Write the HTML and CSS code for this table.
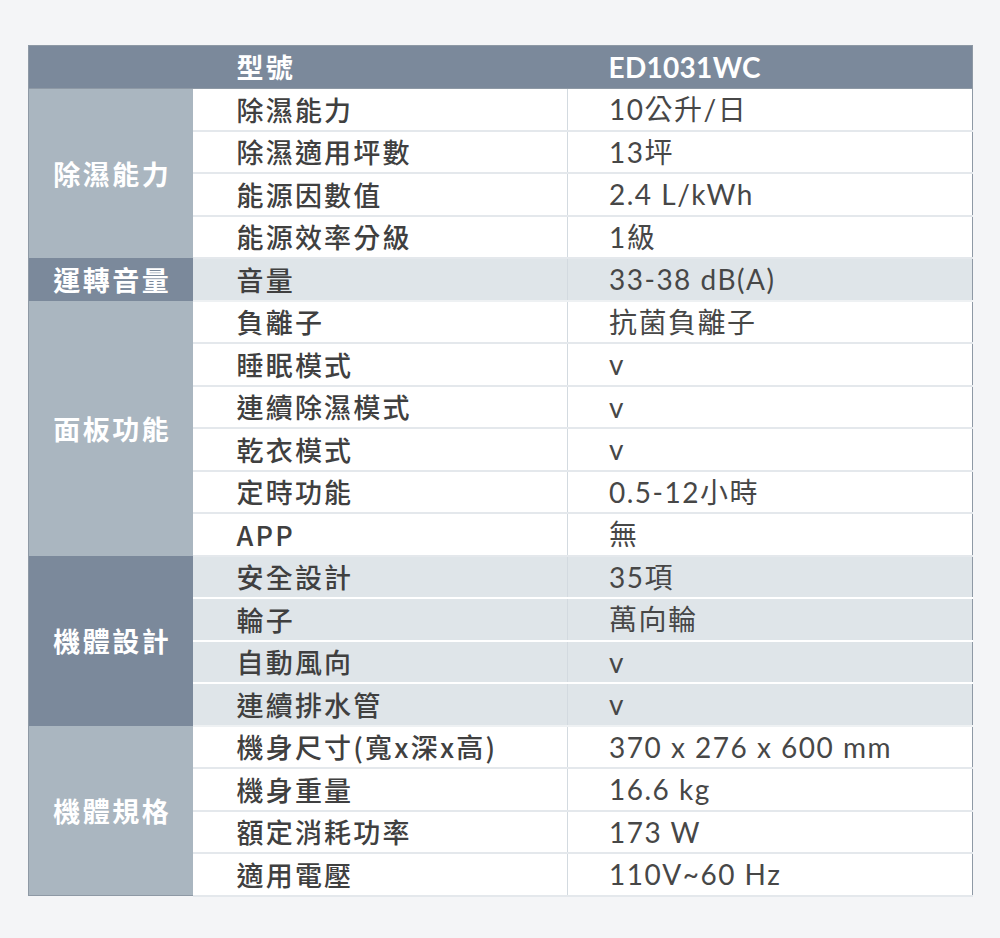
FILE: index.html
```html
<!DOCTYPE html>
<html lang="zh-Hant">
<head>
<meta charset="utf-8">
<link rel="stylesheet" href="styles.css">
</head>
<body>
<div class="wrap">
<table class="spec">
  <colgroup><col class="c1"><col class="c2"><col class="c3"></colgroup>
  <thead>
    <tr class="head"><th></th><th class="k">型號</th><th class="v">ED1031WC</th></tr>
  </thead>
  <tbody>
    <tr><th class="cat light" rowspan="4">除濕能力</th><td class="k">除濕能力</td><td class="v">10公升/日</td></tr>
    <tr><td class="k">除濕適用坪數</td><td class="v">13坪</td></tr>
    <tr><td class="k">能源因數值</td><td class="v">2.4 L/kWh</td></tr>
    <tr class="last"><td class="k">能源效率分級</td><td class="v">1級</td></tr>
    <tr class="grey last"><th class="cat dark">運轉音量</th><td class="k">音量</td><td class="v">33-38 dB(A)</td></tr>
    <tr><th class="cat light" rowspan="6">面板功能</th><td class="k">負離子</td><td class="v">抗菌負離子</td></tr>
    <tr><td class="k">睡眠模式</td><td class="v">v</td></tr>
    <tr><td class="k">連續除濕模式</td><td class="v">v</td></tr>
    <tr><td class="k">乾衣模式</td><td class="v">v</td></tr>
    <tr><td class="k">定時功能</td><td class="v">0.5-12小時</td></tr>
    <tr class="last"><td class="k">APP</td><td class="v">無</td></tr>
    <tr class="grey"><th class="cat dark" rowspan="4">機體設計</th><td class="k">安全設計</td><td class="v">35項</td></tr>
    <tr class="grey"><td class="k">輪子</td><td class="v">萬向輪</td></tr>
    <tr class="grey"><td class="k">自動風向</td><td class="v">v</td></tr>
    <tr class="grey last"><td class="k">連續排水管</td><td class="v">v</td></tr>
    <tr><th class="cat light" rowspan="4">機體規格</th><td class="k">機身尺寸(寬x深x高)</td><td class="v">370 x 276 x 600 mm</td></tr>
    <tr><td class="k">機身重量</td><td class="v">16.6 kg</td></tr>
    <tr><td class="k">額定消耗功率</td><td class="v">173 W</td></tr>
    <tr class="last"><td class="k">適用電壓</td><td class="v">110V~60 Hz</td></tr>
  </tbody>
</table>
</div>
</body>
</html>
```
FILE: styles.css
```css
html, body {
  margin: 0;
  padding: 0;
  background: #f4f5f7;
}
.wrap {
  padding: 45px 0 0 28px;
}
.spec {
  width: 944px;
  table-layout: fixed;
  border-collapse: collapse;
  border: 1px solid #8e99a5;
  font-family: "Noto Sans CJK TC", "Noto Sans", sans-serif;
}
.c1 { width: 164px; }
.c2 { width: 375px; }
.c3 { width: 405px; }
.spec th, .spec td {
  padding: 0;
  height: 42.5px;
  box-sizing: border-box;
  text-align: left;
  vertical-align: middle;
  white-space: nowrap;
}
.head th {
  background: #7b899b;
  color: #ffffff;
  border-bottom: 1px solid #8e99a5;
}
.k {
  padding-left: 44px !important;
  font-size: 27px;
  font-weight: 500;
  letter-spacing: 2.2px;
  color: #404040;
  line-height: 1;
}
.head .k {
  font-weight: 700;
}
.v {
  padding-left: 41px !important;
  font-family: "Lato", "Noto Sans CJK TC", sans-serif;
  font-size: 28px;
  letter-spacing: 1.5px;
  color: #474747;
  line-height: 1;
}
.head .v {
  font-weight: 700;
  letter-spacing: 0.3px;
  color: #ffffff;
}
tbody td {
  background: #ffffff;
  border-bottom: 2px solid #e4e8ec;
}
tbody td.k {
  border-right: 1px solid #d3dae0;
}
tbody tr.grey td {
  background: #dfe5e9;
  border-bottom-color: #ffffff;
}
tbody tr.last td {
  border-bottom-color: #e4e8ec;
}
tbody tr.grey.last td {
  border-bottom-color: #eef1f3;
}
.cat {
  text-align: center !important;
  color: #ffffff;
  font-size: 27px;
  font-weight: 700;
  letter-spacing: 2.5px;
  padding-left: 3px !important;
}
.cat.light { background: #aab6c0; }
.cat.dark { background: #7b899b; }
```
